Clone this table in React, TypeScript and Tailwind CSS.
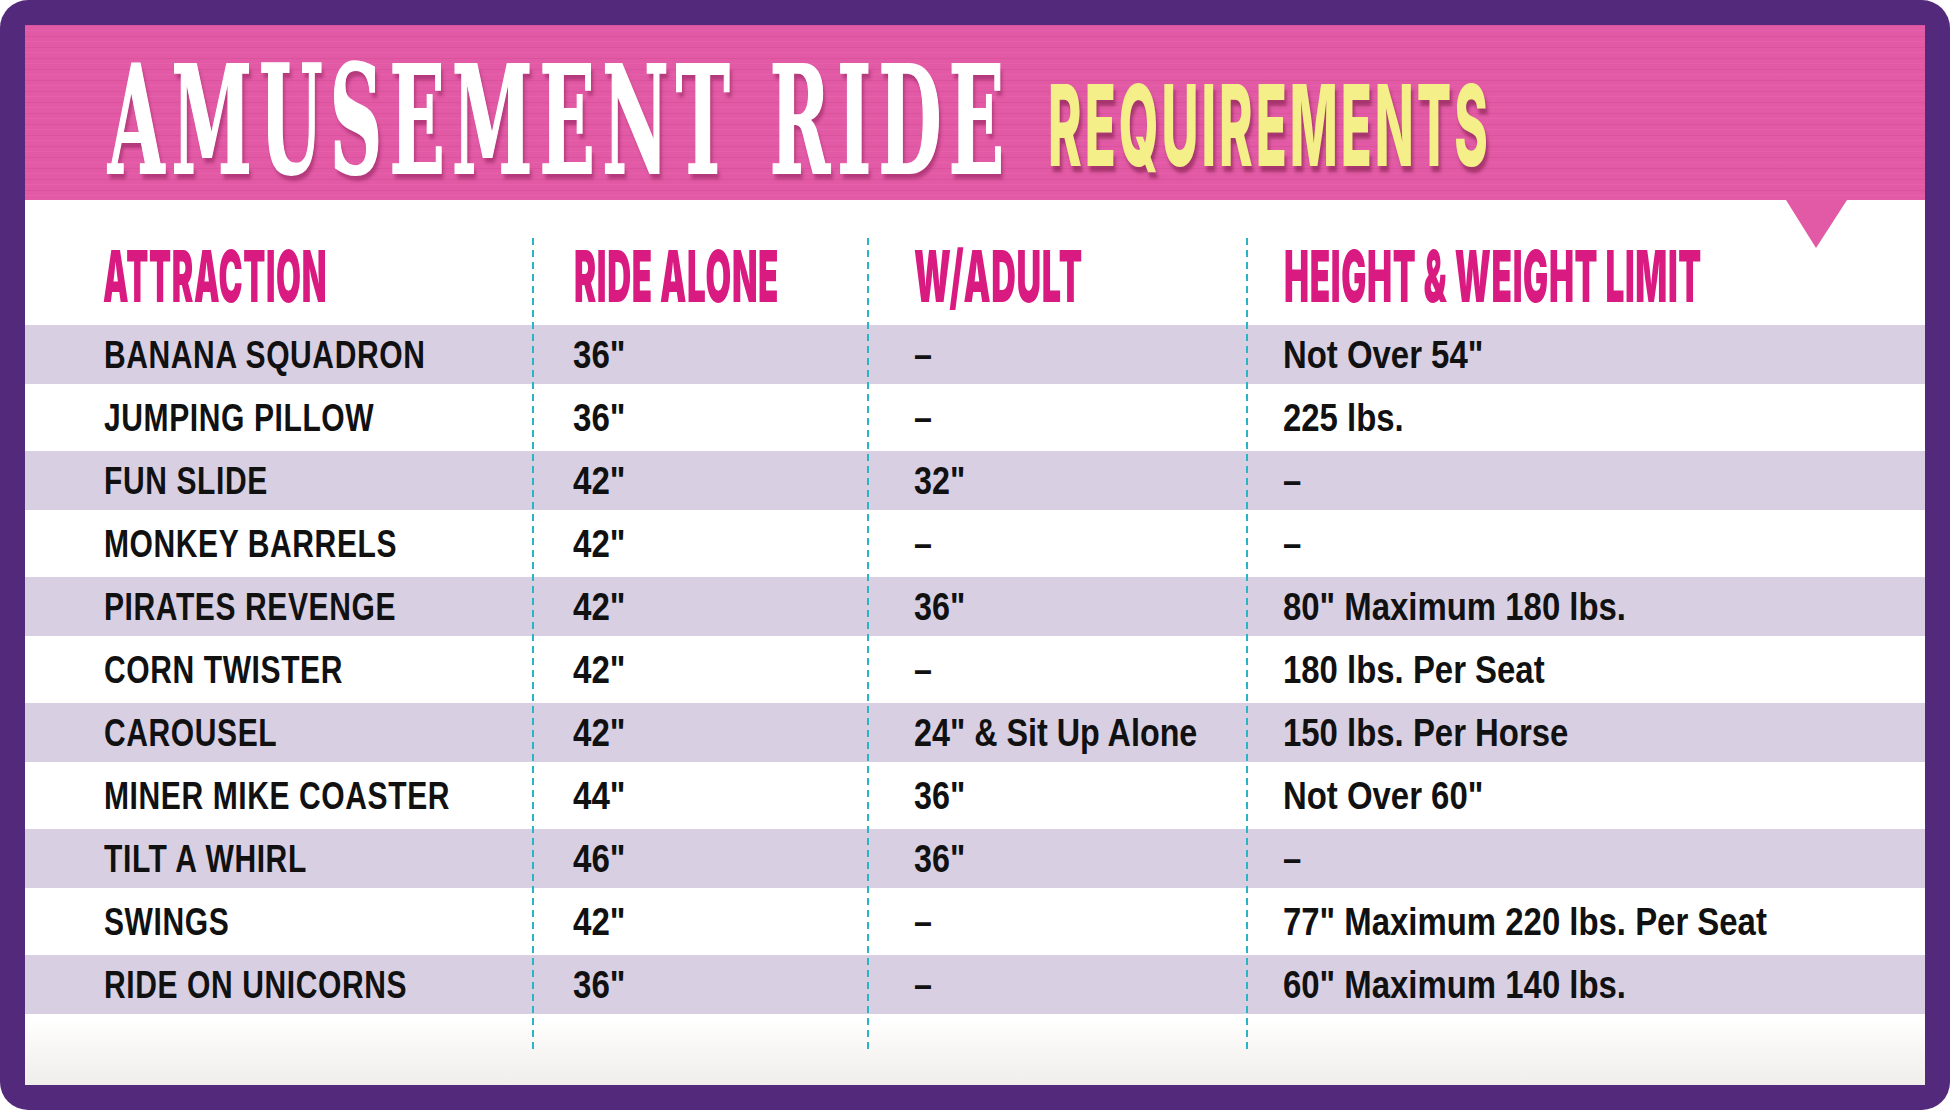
import React, { useLayoutEffect, useRef, useState } from 'react';

// squeeze a line of text horizontally so that it fills a given width
function Fit({ w, className, children }: { w: number; className: string; children: React.ReactNode }) {
    const ref = useRef<HTMLSpanElement>(null);
    const [fit, setFit] = useState({ s: 1, m: 0 });

    useLayoutEffect(() => {
        const measure = () => {
            const el = ref.current;
            if (el && el.offsetWidth > 0) setFit({ s: w / el.offsetWidth, m: w - el.offsetWidth });
        };
        measure();
        document.fonts?.ready.then(measure);
    }, [w]);

    return (
        <span
            ref={ref}
            className={'inline-block origin-left whitespace-nowrap align-top ' + className}
            style={{ transform: `scaleX(${fit.s})`, marginRight: fit.m }}
        >
            {children}
        </span>
    );
}

const rows = [
    ['BANANA SQUADRON', '36"', '–', 'Not Over 54"'],
    ['JUMPING PILLOW', '36"', '–', '225 lbs.'],
    ['FUN SLIDE', '42"', '32"', '–'],
    ['MONKEY BARRELS', '42"', '–', '–'],
    ['PIRATES REVENGE', '42"', '36"', '80" Maximum 180 lbs.'],
    ['CORN TWISTER', '42"', '–', '180 lbs. Per Seat'],
    ['CAROUSEL', '42"', '24" & Sit Up Alone', '150 lbs. Per Horse'],
    ['MINER MIKE COASTER', '44"', '36"', 'Not Over 60"'],
    ['TILT A WHIRL', '46"', '36"', '–'],
    ['SWINGS', '42"', '–', '77" Maximum 220 lbs. Per Seat'],
    ['RIDE ON UNICORNS', '36"', '–', '60" Maximum 140 lbs.'],
];

const headers: [string, number, string][] = [
    ['ATTRACTION', 224, 'pl-[78px]'],
    ['RIDE ALONE', 205, 'pl-[41px]'],
    ['W/ADULT', 169, 'pl-[46px]'],
    ['HEIGHT & WEIGHT LIMIT', 418, 'pl-[37px]'],
];

const grid = 'grid grid-cols-[508px_335px_379px_minmax(0,1fr)]';
const dashed =
    'absolute top-[38px] h-[812px] w-[2px] bg-[repeating-linear-gradient(to_bottom,#2ab5c6_0px,#2ab5c6_7px,transparent_7px,transparent_12px)]';

const App: React.FC = () => {
    return (
        <div className="w-[1950px] h-[1110px] bg-white overflow-hidden">
            <div className="w-full h-full rounded-[28px] bg-[#532a7b] p-[25px]">
                <div className="h-full flex flex-col bg-[linear-gradient(180deg,#eceae8_0px,#f8f7f6_20px,#ffffff_45px,#ffffff_995px,#f7f5f3_1030px,#f0eeeb_1060px)]">
                    {/* title band */}
                    <div className="relative h-[175px] shrink-0 bg-[#e25aa5] bg-[image:repeating-linear-gradient(180deg,rgba(160,30,95,0.12)_0px,rgba(160,30,95,0.12)_1px,transparent_1px,transparent_5px,rgba(255,150,200,0.10)_5px,rgba(255,150,200,0.10)_6px,transparent_6px,transparent_11px)]">
                        <div className="flex items-start pt-[20px] pl-[83px]">
                            <div className="w-[940px] shrink-0">
                                <Fit
                                    w={903}
                                    className="font-['DejaVu_Serif',serif] font-bold text-[150px] leading-none tracking-[0.1em] text-white [-webkit-text-stroke:2px_white] [text-shadow:5px_6px_5px_rgba(125,20,75,0.45)]"
                                >
                                    AMUSEMENT RIDE
                                </Fit>
                            </div>
                            <div className="mt-[24px]">
                                <Fit
                                    w={443}
                                    className="font-['Inter',sans-serif] font-extrabold text-[113px] leading-none tracking-[0.06em] text-[#f4ef88] [text-shadow:5px_6px_5px_rgba(110,20,60,0.5)]"
                                >
                                    REQUIREMENTS
                                </Fit>
                            </div>
                        </div>
                        <svg className="absolute left-[1761px] top-[175px]" width="61" height="48" viewBox="0 0 61 48">
                            <polygon points="0,0 61,0 30,48" fill="#e25aa5" />
                        </svg>
                    </div>

                    {/* table */}
                    <div className="relative flex-1">
                        <div className={grid + ' h-[125px] pt-[40px]'}>
                            {headers.map(([label, w, pad]) => (
                                <div key={label} className={pad + ' min-w-0'}>
                                    <Fit
                                        w={w}
                                        className="font-['Inter',sans-serif] font-black text-[72px] leading-none tracking-[0.02em] text-[#d91a80]"
                                    >
                                        {label}
                                    </Fit>
                                </div>
                            ))}
                        </div>

                        {rows.map((r, i) => (
                            <div
                                key={r[0]}
                                className={
                                    grid +
                                    ' items-center font-["Liberation_Sans",Arial,sans-serif] font-bold text-[38px] leading-none text-[#111111] ' +
                                    (i % 2 === 0 ? 'h-[59px] bg-[#d8cfe3]' : 'h-[67px]')
                                }
                            >
                                <div className="pl-[79px] min-w-0">
                                    <span className="inline-block origin-left whitespace-nowrap scale-x-[0.79] tracking-[0.02em]">{r[0]}</span>
                                </div>
                                <div className="pl-[40px] min-w-0">
                                    <span className="inline-block origin-left whitespace-nowrap scale-x-[0.87]">{r[1]}</span>
                                </div>
                                <div className="pl-[46px] min-w-0">
                                    <span className="inline-block origin-left whitespace-nowrap scale-x-[0.85]">{r[2]}</span>
                                </div>
                                <div className="pl-[36px] min-w-0">
                                    <span className="inline-block origin-left whitespace-nowrap scale-x-[0.866]">{r[3]}</span>
                                </div>
                            </div>
                        ))}

                        <div className={dashed + ' left-[507px]'} />
                        <div className={dashed + ' left-[842px]'} />
                        <div className={dashed + ' left-[1221px]'} />
                    </div>
                </div>
            </div>
        </div>
    );
};

export default App;
